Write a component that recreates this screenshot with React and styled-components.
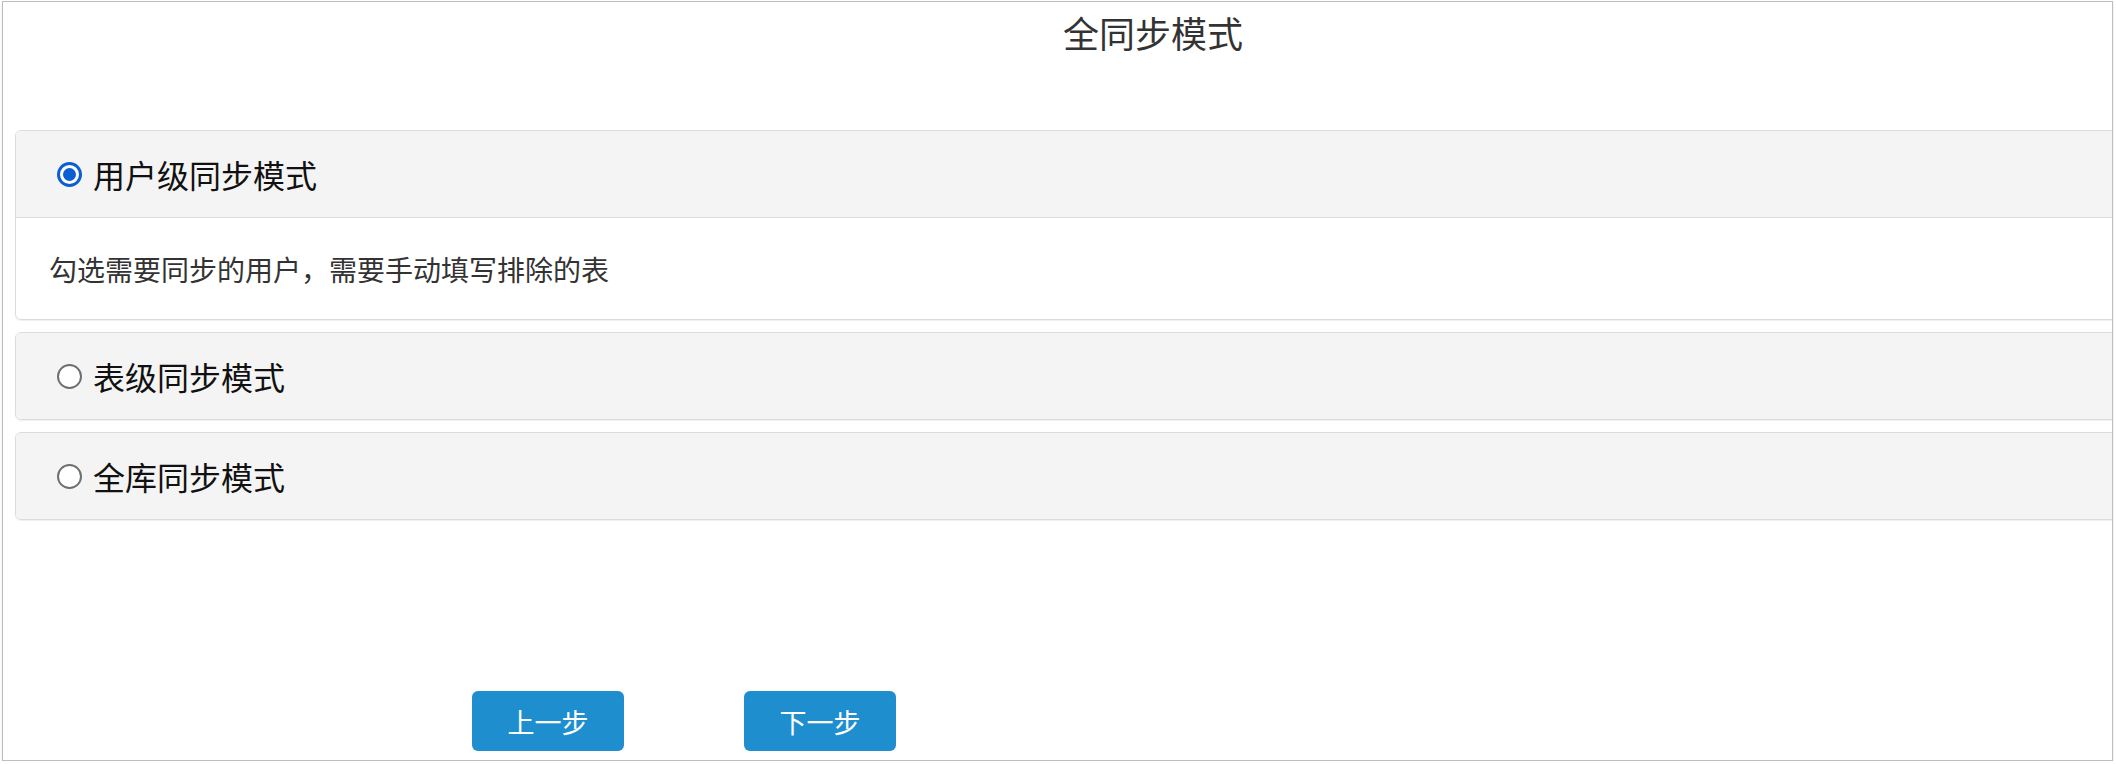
import React, { useState } from 'react';
import styled, { createGlobalStyle } from 'styled-components';

const GlobalStyle = createGlobalStyle`
  html, body {
    margin: 0;
    padding: 0;
    background: #fff;
  }
  body {
    font-family: "Noto Sans CJK SC", "Noto Sans", sans-serif;
  }
`;

const Frame = styled.div`
  margin: 1px 0 0 2px;
  width: 2109px;
  height: 758px;
  border: 1px solid #bdbdbd;
  box-shadow: 0 1px 2px rgba(0, 0, 0, 0.12);
  overflow: hidden;
  background: #fff;
`;

const Content = styled.div`
  width: 2276px;
  padding-left: 12px;
`;

const Title = styled.h1`
  margin: 0;
  font-size: 36px;
  line-height: 60px;
  font-weight: 400;
  color: #333;
  text-align: center;
`;

const PanelGroup = styled.div`
  margin-top: 68px;
  display: flex;
  flex-direction: column;
  gap: 12px;
`;

const Panel = styled.div`
  border: 1px solid #dcdcdc;
  border-radius: 6px;
  background: #fff;
  box-shadow: 0 1px 1px rgba(0, 0, 0, 0.06);
  overflow: hidden;
`;

const PanelHeader = styled.label`
  display: flex;
  align-items: center;
  gap: 11px;
  padding-left: 41px;
  background: #f4f4f4;
  border-bottom: ${p => (p.open ? '1px solid #dcdcdc' : 'none')};
  height: 86px;
  font-size: 32px;
  color: #111;
  cursor: pointer;
`;

const Radio = styled.span`
  width: 25px;
  height: 25px;
  border-radius: 50%;
  box-sizing: border-box;
  flex-shrink: 0;
  background: #fff;
  border: ${p => (p.checked ? '3px solid #0b5fd3' : '2px solid #6f6f6f')};
  display: flex;
  align-items: center;
  justify-content: center;

  &::after {
    content: '';
    display: ${p => (p.checked ? 'block' : 'none')};
    width: 13px;
    height: 13px;
    border-radius: 50%;
    background: #0b5fd3;
  }
`;

const PanelBody = styled.div`
  height: 101px;
  display: flex;
  align-items: center;
  padding-left: 33px;
  font-size: 28px;
  color: #333;
`;

const Actions = styled.div`
  display: flex;
  gap: 120px;
  margin-top: 171px;
  padding-left: 457px;
`;

const Button = styled.button`
  width: 152px;
  height: 60px;
  border: none;
  border-radius: 6px;
  background: #1f8ecf;
  color: #fff;
  font-family: "Noto Sans CJK SC", sans-serif;
  font-size: 27px;
  cursor: pointer;
`;

const modes = [
  { key: 'user', label: '用户级同步模式', desc: '勾选需要同步的用户，需要手动填写排除的表' },
  { key: 'table', label: '表级同步模式', desc: '勾选需要同步的表' },
  { key: 'all', label: '全库同步模式', desc: '同步整个数据库' },
];

const App = () => {
  const [mode, setMode] = useState('user');

  return (
    <>
      <GlobalStyle />
      <Frame>
        <Content>
          <Title>全同步模式</Title>
          <PanelGroup>
            {modes.map(m => (
              <Panel key={m.key}>
                <PanelHeader open={mode === m.key} onClick={() => setMode(m.key)}>
                  <Radio checked={mode === m.key} />
                  {m.label}
                </PanelHeader>
                {mode === m.key && <PanelBody>{m.desc}</PanelBody>}
              </Panel>
            ))}
          </PanelGroup>
          <Actions>
            <Button>上一步</Button>
            <Button>下一步</Button>
          </Actions>
        </Content>
      </Frame>
    </>
  );
};

export default App;
